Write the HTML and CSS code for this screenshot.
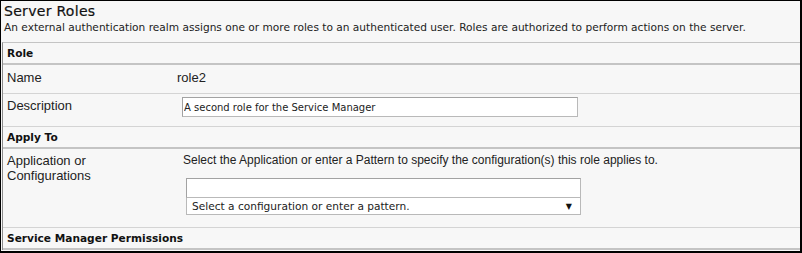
FILE: index.html
```html
<!DOCTYPE html>
<html lang="en">
<head>
    <meta charset="UTF-8">
    <title>Server Roles</title>
    <link rel="stylesheet" href="styles.css">
</head>
<body>
    <div class="frame">
        <div class="page-head">
            <div class="page-title">Server Roles</div>
            <div class="page-desc">An external authentication realm assigns one or more roles to an authenticated user. Roles are authorized to perform actions on the server.</div>
        </div>

        <div class="panel">
            <div class="section-head">Role</div>
            <div class="row row-name">
                <div class="label">Name</div>
                <div class="value">role2</div>
            </div>
            <div class="row row-desc">
                <div class="label">Description</div>
                <div class="value">
                    <input type="text" class="text-input desc-input" value="A second role for the Service Manager">
                </div>
            </div>

            <div class="section-head">Apply To</div>
            <div class="row row-apply">
                <div class="label">Application or<br>Configurations</div>
                <div class="value">
                    <div class="hint">Select the Application or enter a Pattern to specify the configuration(s) this role applies to.</div>
                    <div class="combo">
                        <input type="text" class="text-input combo-input">
                        <div class="combo-select">
                            <span>Select a configuration or enter a pattern.</span>
                            <span class="arrow">&#9660;</span>
                        </div>
                    </div>
                </div>
            </div>

            <div class="section-head">Service Manager Permissions</div>
        </div>
    </div>
</body>
</html>
```

FILE: styles.css
```css
:root {
    --bg: #f7f7f7;
    --line: #d4d4d4;
    --head-line: #c4c4c4;
    --text: #222;
    --input-border: #b9b9b9;
}

body {
    margin: 0;
    padding: 0;
}

.frame {
    width: 802px;
    height: 253px;
    box-sizing: border-box;
    border: 1px solid #000;
    border-right-width: 2px;
    border-bottom-width: 2px;
    background-color: var(--bg);
    overflow: hidden;
    color: var(--text);
}

.page-head {
    height: 41px;
    padding: 2px 0 0 3px;
    box-sizing: border-box;
}

.page-title {
    font-family: "DejaVu Sans", sans-serif;
    font-size: 14px;
    line-height: 17px;
    letter-spacing: 0.3px;
    color: #111;
    -webkit-text-stroke: 0.2px #111;
}

.page-desc {
    font-family: "DejaVu Sans", sans-serif;
    font-size: 10.6px;
    line-height: 14px;
    color: #222;
}

.panel {
    margin-left: 1px;
    border-left: 1px solid #8c8c8c;
    border-top: 1px solid var(--head-line);
}

.section-head {
    height: 20px;
    line-height: 20px;
    padding-left: 4px;
    font-family: "DejaVu Sans", sans-serif;
    font-size: 10.6px;
    font-weight: bold;
    color: #111;
    border-bottom: 2px solid var(--head-line);
}

.row {
    display: flex;
    border-bottom: 1px solid var(--line);
    font-family: "Liberation Sans", Arial, sans-serif;
    font-size: 13px;
}

.label {
    width: 170px;
    padding-left: 4px;
    flex-shrink: 0;
    color: #222;
}

.value {
    flex: 1;
}

.row-name {
    height: 29px;
    padding-bottom: 4px;
    box-sizing: border-box;
    align-items: center;
}

.row-desc {
    height: 33px;
    padding-top: 3px;
    box-sizing: border-box;
}

.row-desc .label {
    line-height: 15px;
    padding-top: 1px;
}

.text-input {
    box-sizing: border-box;
    margin: 0;
    border: 1px solid var(--input-border);
    border-top-color: #a2a2a2;
    border-left-color: #a2a2a2;
    background: #fff;
    font-family: "DejaVu Sans", sans-serif;
    font-size: 10px;
    color: #222;
    outline: none;
}

.desc-input {
    display: block;
    width: 396px;
    height: 20px;
    padding: 0 1px;
    margin-left: 5px;
}

.row-apply {
    height: 79px;
    padding-top: 4px;
    box-sizing: border-box;
    line-height: 15px;
}

.hint {
    font-size: 12px;
    padding-left: 6px;
}

.combo {
    margin-left: 9px;
    margin-top: 10px;
    width: 395px;
}

.combo-input {
    display: block;
    width: 100%;
    height: 20px;
}

.combo-select {
    display: flex;
    justify-content: space-between;
    align-items: center;
    box-sizing: border-box;
    height: 17px;
    border: 1px solid var(--input-border);
    border-top: none;
    background: #fff;
    padding: 0 8px 0 5px;
    font-family: "DejaVu Sans", sans-serif;
    font-size: 10.6px;
    color: #222;
}

.combo-select .arrow {
    font-size: 8px;
    color: #111;
}
```
